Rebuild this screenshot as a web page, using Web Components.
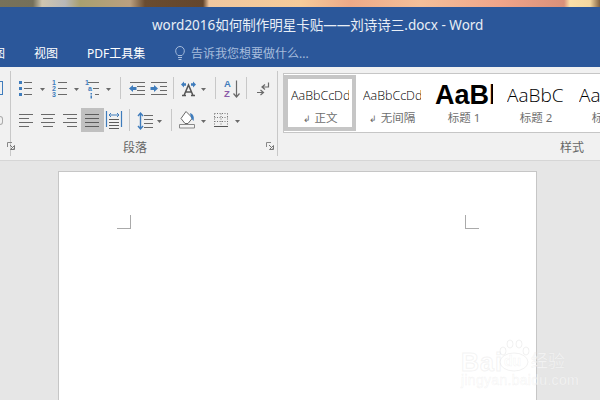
<!DOCTYPE html>
<html lang="zh">
<head>
<meta charset="utf-8">
<title>word</title>
<style>
  html, body { margin: 0; height: 100%; overflow: hidden; }
  body { font-family: "Noto Sans", "Noto Sans CJK SC", sans-serif; }
</style>
</head>
<body>
<word-app>
  <title-bar slot="top" heading="word2016如何制作明星卡贴——刘诗诗三.docx - Word"></title-bar>
  <word-ribbon slot="top"></word-ribbon>
  <doc-page></doc-page>
  <bai-mark></bai-mark>
</word-app>

<script>
const G = '#6a6a6a';
const B = '#3f7cbc';

const lines = (x1, x2, ys, c = G, w = 1) =>
    ys.map(y => `<path d="M${x1} ${y}H${x2}" stroke="${c}" stroke-width="${w}" fill="none"/>`).join('');
const caret = x => `<path d="M${x} 12h5l-2.5 3z" fill="#6a6a6a"/>`;
const dot = (x, y) => `<rect x="${x}" y="${y}" width="3" height="3" fill="${B}"/>`;
const num = (x, y, t, c = B) => `<text x="${x}" y="${y}" font-size="7" font-weight="700" fill="${c}" font-family="Liberation Sans, sans-serif">${t}</text>`;

// width of each tool (its svg is 24 high) and its strokes
const TOOLS = {
    bullets: [30, dot(1, 5) + dot(1, 11) + dot(1, 17) + lines(6, 14, [6.5, 12.5, 18.5]) + caret(22)],
    numbering: [34, num(4, 9, '1') + num(4, 15, '2') + num(4, 21, '3') + lines(10, 19, [6.5, 12.5, 18.5]) + caret(26)],
    multilevel: [32, num(3, 9, '1') + num(6, 15, 'a') + `<rect x="8.5" y="17" width="1.5" height="1.5" fill="${B}"/><rect x="8.5" y="19.5" width="1.5" height="3" fill="${B}"/>` + lines(6, 17, [6.5]) + lines(11, 17, [12.5]) + lines(13, 17, [18.5]) + caret(24)],
    outdent: [22, lines(2, 17, [6.5, 18.5]) + lines(9, 17, [10.5, 14.5]) + `<path d="M1 12.5l4-3.5v2h3.500v3H5v2z" fill="${B}"/>`],
    indent: [20, lines(1, 17, [6.5, 18.5]) + lines(10, 17, [10.5, 14.5]) + `<path d="M8 12.5l-4-3.5v2H.5v3H4v2z" fill="${B}"/>`],
    asian: [34, `<path d="M4 19.5h4M13 19.5h4M6 19.500L10.500 9l4.500 10.500M7.500 16h6" stroke="#555" stroke-width="1.500" fill="none"/><path d="M3 8.500l3-3v1.800h2v2.400H6v1.800zM18 8.500l-3-3v1.800h-2v2.400h2v1.800z" fill="${B}"/>` + caret(23)],
    sort: [23, `<text x="4" y="11" font-size="9.5" font-weight="700" fill="${B}" font-family="Liberation Sans, sans-serif">A</text><text x="4" y="21" font-size="9.5" font-weight="700" fill="#8a5aa8" font-family="Liberation Sans, sans-serif">Z</text><path d="M16.500 4.500v16M13.500 17.500l3 3.500 3-3.500" stroke="${G}" stroke-width="1.200" fill="none"/>`],
    para: [20, `<path d="M17.500 6.500v4.500h-6M14 8.500l-3 2.500 3 2.500" stroke="${G}" stroke-width="1.200" fill="none"/><path d="M6 16.500h6M9.500 14l3 2.500-3 2.500" stroke="${G}" stroke-width="1.200" fill="none"/>`],
    left: [22, lines(1, 15, [6.5, 14.5]) + lines(1, 11, [10.5, 18.5])],
    center: [22, lines(1, 15, [6.5, 14.5]) + lines(3, 13, [10.5, 18.5])],
    right: [19, lines(1, 15, [6.5, 14.5]) + lines(5, 15, [10.5, 18.5])],
    justify: [23, lines(4, 18, [6.5, 10.5, 14.5, 18.5], '#5c5c5c')],
    distribute: [21, `<path d="M2.500 3v16M17.500 3v16" stroke="${B}" stroke-width="1.200"/><path d="M5 7h10M7 5l-2 2 2 2M13 5l2 2-2 2" stroke="${B}" stroke-width="1" fill="none"/>` + lines(5, 15, [11.5, 14.5, 17.5, 20.5], '#5c5c5c')],
    spacing: [33, lines(11, 20, [7.5, 11.5, 15.5, 19.5]) + `<path d="M7.500 5v16M5 8l2.500-3L10 8M5 18l2.500 3 2.500-3" stroke="${B}" stroke-width="1.400" fill="none"/>` + caret(24)],
    shading: [36, `<path d="M6 10.500L11 3.500l6.500 6.500-4.500 5.500h-3z" fill="#fff" stroke="#666"/><path d="M15 5c3 1 4.500 3.500 3.500 8l-2.500-3z" fill="${B}"/><path d="M4.500 16.500h15v3.500h-15z" fill="#f4f4f4" stroke="#888"/>` + caret(26)],
    borders: [32, `<path d="M3.500 5.500h13M3.500 9.500h13M3.500 13.500h13M3.500 5.500v13M10 5.500v13M16.500 5.500v13" stroke="#777" stroke-dasharray="1 1.500" fill="none"/><path d="M3 18.500h14" stroke="#555"/>` + caret(24)]
};

class RibbonTool extends HTMLElement {
    connectedCallback() {
        const [w, svg] = TOOLS[this.getAttribute('name')];
        const on = this.hasAttribute('active');
        this.attachShadow({ mode: 'open' }).innerHTML = `
            <style>
                :host { display: block; flex: none; width: ${w}px; height: 24px; background: ${on ? '#c0c0c0' : 'none'}; }
                svg { display: block; }
            </style>
            <svg width="${w}" height="24" viewBox="0 0 ${w} 24">${svg}</svg>
        `;
    }
}
customElements.define('ribbon-tool', RibbonTool);

class RibbonSep extends HTMLElement {
    connectedCallback() {
        const w = this.getAttribute('w');
        const at = this.getAttribute('at');
        this.attachShadow({ mode: 'open' }).innerHTML = `
            <style>
                :host { display: block; flex: none; width: ${w}px; height: 22px; margin-top: 1px; }
                div { width: 1px; height: 100%; margin-left: ${at}px; background: #c8c8c8; }
            </style>
            <div></div>
        `;
    }
}
customElements.define('ribbon-sep', RibbonSep);

class TitleBar extends HTMLElement {
    connectedCallback() {
        this.attachShadow({ mode: 'open' }).innerHTML = `
            <style>
                :host { display: block; flex: none; color: #fff; background: #2b579a; }
                .strip {
                    height: 7px;
                    background: linear-gradient(90deg, #78725a 0, #75705a 33px, #cfc6b0 42px, #b8b8b8 65px, #a8a070 80px, #bba080 130px, #6a4c30 145px, #64462c 203px, #f0c8a0 209px, #f5cc9a 300px, #eeaa88 350px, #f3c09a 420px, #f0a58a 500px, #d9907a 564px, #fbe0a8 570px, #f5d8a0 590px, #806040 600px);
                }
                .title { height: 31px; display: flex; align-items: center; padding: 3px 0 0 152px; box-sizing: border-box; font-size: 13.500px; white-space: nowrap; color: #e8eef6; }
                .tabs { height: 29px; padding-top: 1px; box-sizing: border-box; display: flex; align-items: center; font-size: 12px; white-space: nowrap; overflow: hidden; }
                .clip { margin-left: -7px; width: 41px; }
                .pdf { margin-left: 29px; width: 58px; }
                .tell { margin-left: 30px; display: flex; align-items: center; gap: 6px; color: #a6bcdc; }
                svg { display: block; }
            </style>
            <div class="strip"></div>
            <div class="title">${this.getAttribute('heading')}</div>
            <div class="tabs">
                <span class="clip">图</span>
                <span>视图</span>
                <span class="pdf">PDF工具集</span>
                <span class="tell">
                    <svg width="10" height="16" viewBox="0 0 10 16"><path d="M3 10.500C1.500 9 .7 8 .7 5.800a4.300 4.300 0 0 1 8.600 0C9.300 8 8.500 9 7 10.500zM3 12.500h4M3.500 14.500h3" stroke="#a6bcdc" fill="none"/></svg>
                    告诉我您想要做什么...
                </span>
            </div>
        `;
    }
}
customElements.define('title-bar', TitleBar);

class RibbonGroup extends HTMLElement {
    connectedCallback() {
        const launcher = this.hasAttribute('launcher');
        this.attachShadow({ mode: 'open' }).innerHTML = `
            <style>
                :host { display: flex; flex-direction: column; box-sizing: border-box; margin: 4px 0; min-width: 0; border-right: 1px solid #c8c8c8; }
                .body { flex: 1; min-height: 0; min-width: 0; }
                .foot { height: 18px; display: flex; align-items: center; justify-content: var(--foot-align, center); padding: var(--foot-pad, 0 18px 0 0); font-size: 12px; color: #666; position: relative; }
                .corner { position: absolute; right: 3px; top: 4px; display: block; }
            </style>
            <div class="body"><slot></slot></div>
            <div class="foot">
                <span>${this.getAttribute('label') || ''}</span>
                ${launcher ? '<svg class="corner" width="8" height="8" viewBox="0 0 8 8"><path d="M.5 5V.5H5" stroke="#888" fill="none"/><path d="M3 3l3.500 3.500M7.500 3.500v4h-4z" stroke="#777" fill="none"/></svg>' : ''}
            </div>
        `;
    }
}
customElements.define('ribbon-group', RibbonGroup);

class StyleItem extends HTMLElement {
    connectedCallback() {
        const mark = this.hasAttribute('mark') ? '<span class="ret">↲</span>' : '';
        const size = this.getAttribute('size') || 12.5;
        const weight = this.getAttribute('weight') || 300;
        const font = weight > 400 ? '"Liberation Sans"' : '"Open Sans"';
        const on = this.hasAttribute('active');
        this.attachShadow({ mode: 'open' }).innerHTML = `
            <style>
                :host { display: block; flex: none; box-sizing: border-box; width: 72px; height: 56px; margin-top: 1px; overflow: hidden; background: #fff; border: 4px solid ${on ? '#c6c6c6' : '#fff'}; }
                .sample { height: 32px; margin: 0 3px; overflow: hidden; display: flex; align-items: center; white-space: nowrap; color: #000; font-family: ${font}, sans-serif; font-size: ${size}px; font-weight: ${weight}; }
                .name { text-align: center; font-size: 11.500px; line-height: 16px; color: #6e6e6e; white-space: nowrap; margin-top: -1px; }
                .ret { font-size: 9px; margin-right: 4px; color: #666; }
            </style>
            <div class="sample">${this.getAttribute('sample')}</div>
            <div class="name">${mark}${this.getAttribute('label')}</div>
        `;
    }
}
customElements.define('style-item', StyleItem);

class WordRibbon extends HTMLElement {
    connectedCallback() {
        this.attachShadow({ mode: 'open' }).innerHTML = `
            <style>
                :host { display: flex; flex: none; height: 94px; box-sizing: border-box; background: #f1f1f1; border-bottom: 1px solid #d6d6d6; overflow: hidden; }
                .stub { width: 11px; flex: none; }
                .para { width: 267px; flex: none; }
                .rows { padding: 5px 0 0 7px; display: flex; flex-direction: column; gap: 8px; }
                .row { display: flex; height: 24px; }
                .styles { flex: 1; border-right: 0; padding-left: 5px; --foot-align: flex-end; --foot-pad: 0 16px 0 0; }
                .gallery { display: flex; height: 60px; margin-top: 2px; box-sizing: border-box; background: #fff; border-top: 1px solid #c6c6c6; border-bottom: 1px solid #c6c6c6; border-left: 1px solid #c6c6c6; overflow: hidden; }
                .box { width: 3px; height: 14px; margin-top: 10px; box-sizing: border-box; border: 1px solid #3f7cbc; border-left: 0; }
                .ring { width: 3px; height: 9px; margin-top: 21px; border: 1px solid #aaa; border-left: 0; border-radius: 0 5px 5px 0; box-sizing: border-box; }
            </style>
            <ribbon-group class="stub" launcher>
                <div class="box"></div>
                <div class="ring"></div>
            </ribbon-group>
            <ribbon-group class="para" label="段落" launcher>
                <div class="rows">
                    <div class="row">
                        <ribbon-tool name="bullets"></ribbon-tool>
                        <ribbon-tool name="numbering"></ribbon-tool>
                        <ribbon-tool name="multilevel"></ribbon-tool>
                        <ribbon-sep w="14" at="6"></ribbon-sep>
                        <ribbon-tool name="outdent"></ribbon-tool>
                        <ribbon-tool name="indent"></ribbon-tool>
                        <ribbon-sep w="8" at="3"></ribbon-sep>
                        <ribbon-tool name="asian"></ribbon-tool>
                        <ribbon-sep w="8" at="3"></ribbon-sep>
                        <ribbon-tool name="sort"></ribbon-tool>
                        <ribbon-sep w="8" at="3"></ribbon-sep>
                        <ribbon-tool name="para"></ribbon-tool>
                    </div>
                    <div class="row">
                        <ribbon-tool name="left"></ribbon-tool>
                        <ribbon-tool name="center"></ribbon-tool>
                        <ribbon-tool name="right"></ribbon-tool>
                        <ribbon-tool name="justify" active></ribbon-tool>
                        <ribbon-tool name="distribute"></ribbon-tool>
                        <ribbon-sep w="8" at="4"></ribbon-sep>
                        <ribbon-tool name="spacing"></ribbon-tool>
                        <ribbon-sep w="9" at="5"></ribbon-sep>
                        <ribbon-tool name="shading"></ribbon-tool>
                        <ribbon-tool name="borders"></ribbon-tool>
                    </div>
                </div>
            </ribbon-group>
            <ribbon-group class="styles" label="样式">
                <div class="gallery">
                    <style-item active mark sample="AaBbCcDd" label="正文"></style-item>
                    <style-item mark sample="AaBbCcDd" label="无间隔"></style-item>
                    <style-item sample="AaBb" size="27" weight="700" label="标题 1"></style-item>
                    <style-item sample="AaBbC" size="19" label="标题 2"></style-item>
                    <style-item sample="AaBbC" size="19" label="标题 3"></style-item>
                </div>
            </ribbon-group>
        `;
    }
}
customElements.define('word-ribbon', WordRibbon);

class DocPage extends HTMLElement {
    connectedCallback() {
        this.attachShadow({ mode: 'open' }).innerHTML = `
            <style>
                :host { display: flex; justify-content: space-between; align-items: flex-start; box-sizing: border-box; width: 479px; height: 300px; margin: 10px 0 0 58px; padding: 43px 57px 0 58px; background: #fff; border: 1px solid #c6c6c6; }
                i { display: block; width: 14px; height: 14px; box-sizing: border-box; border-bottom: 1px solid #aaa; }
                .a { border-right: 1px solid #aaa; }
                .b { border-left: 1px solid #aaa; }
            </style>
            <i class="a"></i>
            <i class="b"></i>
        `;
    }
}
customElements.define('doc-page', DocPage);

class BaiMark extends HTMLElement {
    connectedCallback() {
        this.attachShadow({ mode: 'open' }).innerHTML = `
            <style>
                :host { position: absolute; left: 460px; top: 340px; width: 112px; height: 50px; font-family: "Liberation Sans", sans-serif; color: rgba(255,255,255,.6); }
                .bai { position: absolute; left: 1px; top: 8px; font-size: 25px; font-weight: 700; letter-spacing: 1px; line-height: 28px; -webkit-text-stroke: 1px rgba(215,215,215,.3); }
                .jy { position: absolute; left: 71px; top: 8px; font-size: 17px; line-height: 24px; font-family: "Noto Sans CJK SC", sans-serif; -webkit-text-stroke: .6px rgba(215,215,215,.3); }
                .url { position: absolute; left: 1px; top: 32px; font-size: 14px; line-height: 16px; letter-spacing: .3px; white-space: nowrap; -webkit-text-stroke: .5px rgba(215,215,215,.3); }
                svg { position: absolute; left: 36px; top: -2px; }
                .du { position: absolute; left: 44px; top: 12px; font-size: 14px; font-weight: 700; line-height: 18px; -webkit-text-stroke: .5px rgba(215,215,215,.3); }
            </style>
            <span class="bai">Bai</span>
            <svg width="36" height="36" viewBox="0 0 36 36" fill="rgba(255,255,255,.35)" stroke="rgba(215,215,215,.35)">
                <ellipse cx="18" cy="24" rx="14" ry="9"/>
                <ellipse cx="7" cy="13" rx="3" ry="4"/>
                <ellipse cx="14" cy="6" rx="3" ry="4"/>
                <ellipse cx="23" cy="6" rx="3" ry="4"/>
                <ellipse cx="30" cy="13" rx="3" ry="4"/>
            </svg>
            <span class="du">du</span>
            <span class="jy">经验</span>
            <span class="url">jingyan.baidu.com</span>
        `;
    }
}
customElements.define('bai-mark', BaiMark);

class WordApp extends HTMLElement {
    connectedCallback() {
        this.attachShadow({ mode: 'open' }).innerHTML = `
            <style>
                :host { display: block; position: relative; width: 600px; height: 400px; overflow: hidden; background: #e6e6e6; }
            </style>
            <slot name="top"></slot>
            <slot></slot>
        `;
    }
}
customElements.define('word-app', WordApp);
</script>
</body>
</html>
